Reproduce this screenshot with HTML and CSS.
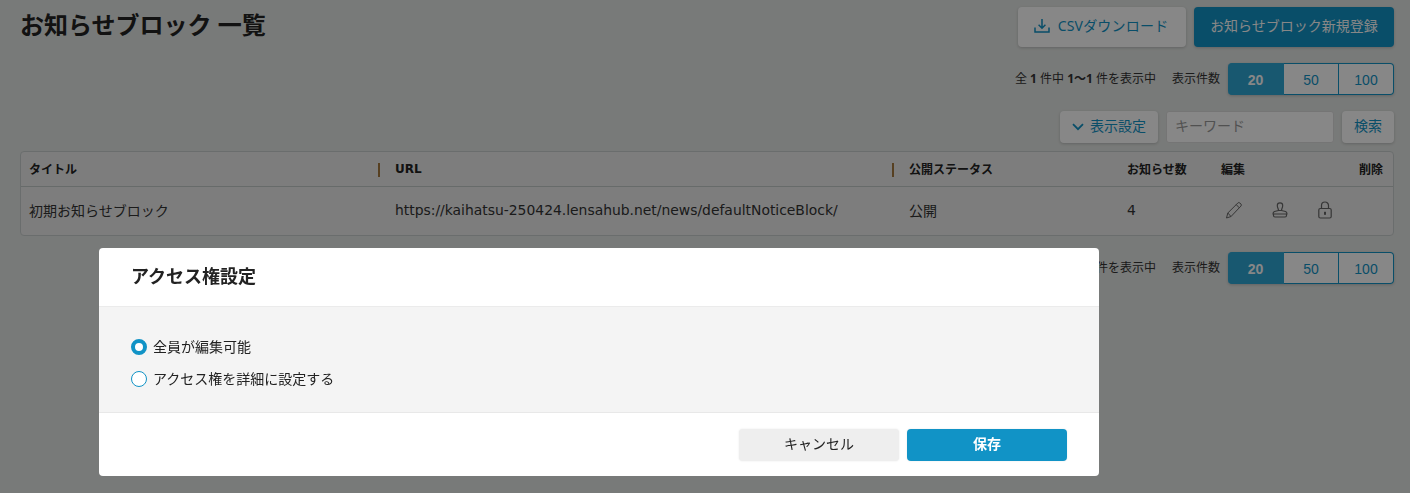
FILE: index.html
```html
<!DOCTYPE html>
<html lang="ja">
<head>
<meta charset="utf-8">
<title>お知らせブロック 一覧</title>
<link rel="stylesheet" href="styles.css">
</head>
<body>
<main class="page">
  <header class="page-head">
    <h1 class="page-title">お知らせブロック 一覧</h1>
    <div class="head-actions">
      <button class="btn btn-light btn-csv">
        <svg class="ico-dl" viewBox="0 0 18 18" width="18" height="18"><path d="M9 2v9M5.600 7.800 9 11.200l3.400-3.400M2 10.500V15h14v-4.500" fill="none" stroke="currentColor" stroke-width="1.500"/></svg>
        <span class="btn-text csv-text">CSVダウンロード</span>
      </button>
      <button class="btn btn-primary btn-new"><span class="btn-text">お知らせブロック新規登録</span></button>
    </div>
  </header>

  <div class="pager">
    <span class="pager-info">全 <b>1</b> 件中 <b>1〜1</b> 件を表示中</span>
    <span class="pager-label">表示件数</span>
    <div class="seg"><span class="seg-item seg-on">20</span><span class="seg-item seg-mid">50</span><span class="seg-item seg-last">100</span></div>
  </div>

  <div class="search-row">
    <button class="btn btn-light btn-settings">
      <svg viewBox="0 0 12 8" width="12" height="8"><path d="M1 1.200 6 6.200l5-5" fill="none" stroke="currentColor" stroke-width="1.800"/></svg>
      <span class="btn-text">表示設定</span>
    </button>
    <div class="keyword"><span class="btn-text">キーワード</span></div>
    <button class="btn btn-light btn-search"><span class="btn-text">検索</span></button>
  </div>

  <section class="table">
    <div class="tr th">
      <div class="cell cell-sep"><span>タイトル</span><i class="sep"></i></div>
      <div class="cell cell-sep"><span class="latin">URL</span><i class="sep"></i></div>
      <div class="cell">公開ステータス</div>
      <div class="cell">お知らせ数</div>
      <div class="cell cell-ends"><span>編集</span><span>削除</span></div>
    </div>
    <div class="tr td">
      <div class="cell">初期お知らせブロック</div>
      <div class="cell latin">https://kaihatsu-250424.lensahub.net/news/defaultNoticeBlock/</div>
      <div class="cell">公開</div>
      <div class="cell latin">4</div>
      <div class="cell cell-icons">
        <svg viewBox="0 0 18 18" width="18" height="18"><path d="M1.500 17 2.800 12 12.800 2a1.500 1.500 0 0 1 2.100 0l1 1a1.500 1.500 0 0 1 0 2.100L6 15.500ZM2.800 12 6 15.500M11.200 3.600l3.200 3.300" fill="none" stroke="currentColor" stroke-width="1"/></svg>
        <svg viewBox="0 0 18 18" width="18" height="18"><path d="M7.500 9.500C7.500 7.500 6.300 6.800 6.300 4.500a2.700 2.700 0 0 1 5.400 0c0 2.300-1.200 3-1.200 5M7.500 9.500 3.500 10.500Q2 11 2 13h14q0-2-1.500-2.500L10.500 9.500ZM2.500 13v1.500q0 1.500 1.500 1.500h10q1.500 0 1.500-1.500V13" fill="none" stroke="currentColor" stroke-width="1.150"/></svg>
        <svg viewBox="0 0 18 18" width="18" height="18"><path d="M5.500 7.500V4.500a3.500 3.500 0 0 1 7 0v3" fill="none" stroke="currentColor" stroke-width="1.200"/><rect x="2.800" y="7.500" width="12.400" height="9.500" rx="1.500" fill="none" stroke="currentColor" stroke-width="1.200"/><rect x="8" y="10.800" width="2" height="3" fill="currentColor"/></svg>
      </div>
    </div>
  </section>

  <div class="pager pager-bottom">
    <span class="pager-info">全 <b>1</b> 件中 <b>1〜1</b> 件を表示中</span>
    <span class="pager-label">表示件数</span>
    <div class="seg"><span class="seg-item seg-on">20</span><span class="seg-item seg-mid">50</span><span class="seg-item seg-last">100</span></div>
  </div>
</main>

<div class="overlay"></div>

<div class="modal" role="dialog">
  <div class="modal-head"><span class="modal-title">アクセス権設定</span></div>
  <div class="modal-body">
    <label class="radio"><i class="radio-mark radio-checked"></i><span class="radio-text">全員が編集可能</span></label>
    <label class="radio"><i class="radio-mark"></i><span class="radio-text">アクセス権を詳細に設定する</span></label>
  </div>
  <div class="modal-foot">
    <button class="btn-modal btn-cancel"><span class="btn-text">キャンセル</span></button>
    <button class="btn-modal btn-save"><span class="btn-text">保存</span></button>
  </div>
</div>
</body>
</html>
```
FILE: styles.css
```css
* { box-sizing: border-box; }
html, body { height: 100%; }
body {
  margin: 0;
  background: #e3e6e4;
  color: #222;
  font-family: "Noto Sans", "Noto Sans CJK JP", sans-serif;
  font-size: 13px;
  overflow: hidden;
}
button { font-family: inherit; cursor: pointer; padding: 0; }
.latin { font-family: "DejaVu Sans", "Noto Sans CJK JP", sans-serif; }
.btn-text { display: block; line-height: 20px; margin-bottom: 3px; }
.csv-text { letter-spacing: .2px; }

.page { padding: 7px 16px 0 20px; }

.page-head { display: flex; justify-content: space-between; align-items: flex-start; }
.page-title { margin: 0; font-size: 24px; line-height: 36px; font-weight: 700; color: #222; }
.head-actions { display: flex; gap: 8px; }

.btn {
  display: flex;
  align-items: center;
  justify-content: center;
  border: 0;
  border-radius: 4px;
  font-size: 14px;
  box-shadow: 0 1px 3px rgba(0,0,0,.18);
}
.btn-light { background: #fff; color: #1193c6; }
.btn-primary { background: #1193c6; color: #fff; }
.btn-csv { width: 168px; height: 40px; gap: 7px; }
.btn-new { width: 200px; height: 40px; }
.ico-dl { flex: none; margin-left: -3px; margin-bottom: 2px; }

.pager { display: flex; justify-content: flex-end; align-items: center; margin-top: 16px; height: 32px; }
.pager-bottom { margin-top: 16px; }
.pager-info { font-size: 12px; line-height: 18px; color: #333; }
.pager-info b { font-weight: 700; }
.pager-label { font-size: 12px; line-height: 18px; margin: 0 8px 0 16px; color: #333; }
.seg { display: flex; width: 166px; height: 32px; box-shadow: 0 1px 3px rgba(0,0,0,.18); border-radius: 4px; }
.seg-item {
  display: flex; align-items: center; justify-content: center;
  padding-top: 1px;
  font-family: "Liberation Sans", sans-serif;
  font-size: 14px;
  background: #fff;
  color: #1193c6;
  border: 1px solid #1193c6;
  border-left: 0;
}
.seg-on { width: 56px; background: #2ea6d4; color: #fff; font-weight: 700; border-radius: 4px 0 0 4px; border-color: #2ea6d4; }
.seg-mid { width: 55px; }
.seg-last { width: 55px; border-radius: 0 4px 4px 0; }

.search-row { display: flex; justify-content: flex-end; align-items: center; margin-top: 16px; height: 32px; }
.btn-settings { width: 98px; height: 32px; gap: 6px; }
.keyword {
  width: 168px; height: 32px; margin-left: 8px; padding-left: 8px;
  display: flex; align-items: center;
  background: #fff; border: 1px solid #ddd; border-radius: 3px;
  font-size: 14px; color: #999;
}
.btn-search { width: 52px; height: 32px; margin-left: 8px; }

.table { margin-top: 8px; width: 1374px; background: #ececec; border: 1px solid #c9cfcf; border-radius: 4px; }
.tr { display: grid; grid-template-columns: 366px 514px 218px 94px 1fr; align-items: center; }
.th { height: 35px; padding-bottom: 1px; border-bottom: 1px solid #c3cac9; font-size: 12px; font-weight: 700; color: #222; }
.td { height: 48px; padding-bottom: 3px; font-size: 14px; color: #333; }
.td .latin { font-size: 13.9px; }
.cell { padding-left: 8px; white-space: nowrap; }
.cell-sep { display: flex; justify-content: space-between; align-items: center; padding-right: 7px; }
.sep { display: block; width: 2px; height: 14px; background: #a5793f; margin-top: 3px; }
.cell-ends { display: flex; justify-content: space-between; padding-right: 10px; }
.cell-icons { display: flex; gap: 27.5px; color: #666; padding-left: 12px; padding-top: 1px; }

.overlay { position: fixed; inset: 0; background: rgba(0,0,0,.47); }

.modal {
  position: absolute; left: 99px; top: 248px; width: 1000px; height: 228px;
  background: #fff; border-radius: 4px; overflow: hidden;
  display: flex; flex-direction: column;
}
.modal-head {
  height: 59px; padding-left: 32px;
  display: flex; align-items: center;
  font-size: 18px; font-weight: 700; color: #222;
  border-bottom: 1px solid #ebebeb;
}
.modal-title { margin-bottom: 4px; }
.modal-body {
  height: 106px; padding: 30px 32px 0;
  background: #f4f4f4;
  border-bottom: 1px solid #e8e8e8;
  display: flex; flex-direction: column; gap: 12px;
}
.radio { display: flex; align-items: center; gap: 6px; height: 20px; font-size: 14px; color: #222; }
.radio-text { margin-bottom: 2px; }
.radio-mark { flex: none; width: 16px; height: 16px; border-radius: 50%; background: #fff; border: 1px solid #1193c6; }
.radio-checked { border: 4px solid #1193c6; }
.modal-foot { flex: 1; display: flex; justify-content: flex-end; gap: 8px; padding: 16px 32px 0 0; }
.btn-modal {
  display: flex; align-items: center; justify-content: center;
  width: 160px; height: 32px; border: 0; border-radius: 4px; font-size: 14px;
  box-shadow: 0 0 2px rgba(0,0,0,.1);
}
.btn-cancel { background: #eee; color: #222; }
.btn-save { background: #1193c6; color: #fff; font-weight: 700; }
```
